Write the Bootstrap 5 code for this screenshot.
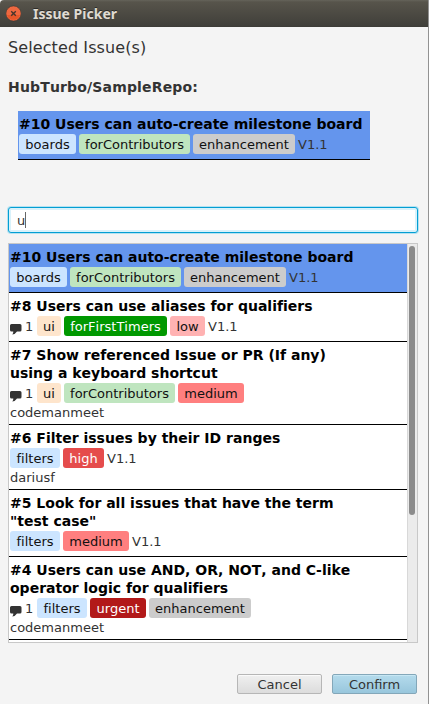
<!DOCTYPE html>
<html lang="en">
<head>
<meta charset="utf-8">
<meta name="viewport" content="width=device-width, initial-scale=1">
<title>Issue Picker</title>
<link rel="stylesheet" href="https://cdn.jsdelivr.net/npm/bootstrap@5.3.0/dist/css/bootstrap.min.css">
<style>
body{font:13px/20px "DejaVu Sans",sans-serif;color:#333;background:#f4f4f4;font-kerning:none;font-variant-ligatures:none}
.window{width:429px;height:704px;border-right:1px solid #929292;background:#f4f4f4}
.titlebar{height:27px;width:428px;padding-left:6px;background:linear-gradient(#65635a 0,#57544b 2px,#403f3a 26px,#3b3a36);border-top-left-radius:4px;color:#dfdbd2;font:bold 14px/27px "Noto Sans",sans-serif;text-shadow:0 -1px #2c2b28}
.titlebar span{margin-left:12px;letter-spacing:0}
.content{padding:0 11px 0 8px}
.heading{font-size:16px;line-height:20px;margin-top:11px;letter-spacing:.1px}
.repo{font-size:14px;line-height:18px;font-weight:700;margin-top:20px;letter-spacing:.16px}
.picked{width:352px;margin:15px 0 0 10px}
.issue{padding:4px 1px 5px;border-bottom:1px solid #000;background:#fff}
.issue.active{background:#6495ed}
.issue-title{color:#000;font-size:14px;line-height:18px;font-weight:700;margin-bottom:1px;white-space:nowrap}
.tags{gap:3px;height:20px;line-height:22px;white-space:nowrap}
.comment-icon{margin-top:7px}
.count{width:9px}
.tag{flex:none;height:20px;text-align:center;border-radius:3px;color:#111}
.boards{width:57px;background:#cce5ff}.filters{width:50px;background:#cce5ff}
.contributors{width:111px;background:#bfe5bf}.enhancement{width:102px;background:#ccc}
.ui{width:24px;background:#fee5cc}.first-timers{width:103px;background:#009800;color:#fff}
.low{width:35px;background:#ffb2b2}.medium{width:66px;background:#ff7f7f}
.high{width:41px;background:#e54c4c;color:#fff}.urgent{width:56px;background:#b21919;color:#fff}
.author{line-height:16px;padding-top:2px;height:16px}
.query{display:block;width:410px;height:26px;margin:47px 0 0;padding:0 8px;border:1px solid #039ed3;border-radius:3px;background:#fff;box-shadow:0 0 0 1px #b5e2f1,inset 0 0 0 2px #d9f2fb;line-height:25px}
.caret{display:inline-block;width:1px;height:16px;background:#666;vertical-align:-3px}
.results{width:410px;height:400px;margin-top:10px;border:1px solid #c8c8c8;background:#fff}
.scroller{width:10px;padding:2px 1px 0 0;background:#ebebeb;border-left:1px solid #d8d8d8}
.thumb{width:6px;height:269px;border-radius:3px;background:#8b8b8b;margin-left:1px}
.actions{margin-top:31px;gap:10px}
.actions .btn{width:85px;height:20px;padding:0;border:1px solid #b6b6b6;border-radius:2px;font:13px/20px "DejaVu Sans",sans-serif;color:#333;background:linear-gradient(#f0f0f0,#dcdcdc);box-shadow:inset 0 1px #fafafa}
.actions .confirm{border-color:#83a7b9;background:linear-gradient(#b4dbec,#98c6dc);box-shadow:inset 0 1px #c7e7f4}
</style>
</head>
<body>
<svg class="d-none"><symbol id="comment" viewBox="0 0 12 12"><path fill="#333" d="M1.500 1h8.500Q11.500 1 11.500 2.500v4.500Q11.500 8.500 10 8.500H7Q5.500 11 2.300 11.500Q3.500 10 3.300 8.500H1.500Q0 8.500 0 7v-4.500Q0 1 1.500 1z"/></symbol></svg>
<main class="window overflow-hidden">
<header class="titlebar d-flex align-items-center">
<svg width="15" height="17" viewBox="0 0 15 17"><circle cx="7.500" cy="8.500" r="7.600" fill="#ee6840" stroke="#3c3832" stroke-width=".6"/><path d="M1 10a6.800 6.800 0 0 0 13 0" fill="#e75729"/><path d="M5.200 6.200l4.600 4.600m0-4.600l-4.600 4.600" stroke="#48352b" stroke-width="1.400"/></svg>
<span>Issue Picker</span>
</header>
<div class="content">
<div class="heading">Selected Issue(s)</div>
<div class="repo">HubTurbo/SampleRepo:</div>
<div class="picked"><div class="issue active"><div class="issue-title">#10 Users can auto-create milestone board</div><div class="tags d-flex"><span class="tag boards">boards</span><span class="tag contributors">forContributors</span><span class="tag enhancement">enhancement</span><span>V1.1</span></div></div></div>
<div class="query">u<span class="caret"></span></div>
<div class="results d-flex overflow-hidden">
<div class="flex-grow-1">
<div class="issue active"><div class="issue-title">#10 Users can auto-create milestone board</div><div class="tags d-flex"><span class="tag boards">boards</span><span class="tag contributors">forContributors</span><span class="tag enhancement">enhancement</span><span>V1.1</span></div></div>
<div class="issue"><div class="issue-title">#8 Users can use aliases for qualifiers</div><div class="tags d-flex"><svg width="12" height="12" class="comment-icon"><use href="#comment"/></svg><span class="count">1</span><span class="tag ui">ui</span><span class="tag first-timers">forFirstTimers</span><span class="tag low">low</span><span>V1.1</span></div></div>
<div class="issue"><div class="issue-title">#7 Show referenced Issue or PR (If any)<br>using a keyboard shortcut</div><div class="tags d-flex"><svg width="12" height="12" class="comment-icon"><use href="#comment"/></svg><span class="count">1</span><span class="tag ui">ui</span><span class="tag contributors">forContributors</span><span class="tag medium">medium</span></div><div class="author">codemanmeet</div></div>
<div class="issue"><div class="issue-title">#6 Filter issues by their ID ranges</div><div class="tags d-flex"><span class="tag filters">filters</span><span class="tag high">high</span><span>V1.1</span></div><div class="author">dariusf</div></div>
<div class="issue"><div class="issue-title">#5 Look for all issues that have the term<br>"test case"</div><div class="tags d-flex"><span class="tag filters">filters</span><span class="tag medium">medium</span><span>V1.1</span></div></div>
<div class="issue"><div class="issue-title">#4 Users can use AND, OR, NOT, and C-like<br>operator logic for qualifiers</div><div class="tags d-flex"><svg width="12" height="12" class="comment-icon"><use href="#comment"/></svg><span class="count">1</span><span class="tag filters">filters</span><span class="tag urgent">urgent</span><span class="tag enhancement">enhancement</span></div><div class="author">codemanmeet</div></div>
</div>
<div class="scroller flex-shrink-0"><div class="thumb"></div></div>
</div>
<div class="actions d-flex justify-content-end"><button type="button" class="btn">Cancel</button><button type="button" class="btn confirm">Confirm</button></div>
</div>
</main>
<script src="https://cdn.jsdelivr.net/npm/bootstrap@5.3.0/dist/js/bootstrap.bundle.min.js"></script>
</body>
</html>
